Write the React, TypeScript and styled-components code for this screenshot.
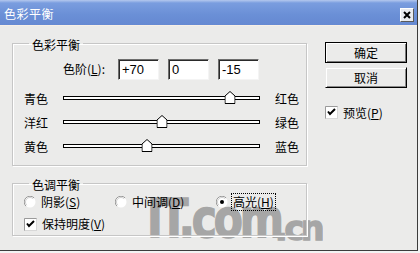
import React from "react";
import styled, { createGlobalStyle } from "styled-components";

const Global = createGlobalStyle`
  html, body { margin: 0; padding: 0; background: #f3f3f3; }
  body {
    font-family: "Noto Sans CJK SC", "Liberation Sans", sans-serif;
    font-size: 12px;
    color: #000;
  }
  * { box-sizing: border-box; }
`;

const Window = styled.div`
  position: relative;
  width: 418px;
  height: 251px;
  background: #ebebea;
  border-right: 1px solid #3c3c3c;
  border-bottom: 1px solid #3c3c3c;
  overflow: hidden;
  display: flex;
  flex-direction: column;
`;

const TitleBar = styled.div`
  flex: none;
  height: 26px;
  background: linear-gradient(#b4c8ee 0, #7a9ddf 3px, #6a8fd6 60%, #6589d2 100%);
  border-bottom: 1px solid #f7efe6;
  display: flex;
  justify-content: space-between;
  padding: 0 3px 0 4px;
`;

const Title = styled.span`
  color: #fff;
  font-size: 12px;
  line-height: 14px;
  margin-top: 7px;
  letter-spacing: 0.5px;
`;

const CloseButton = styled.div`
  width: 14px;
  height: 14px;
  margin-top: 8px;
  background: #e9ebef;
  border-top: 1px solid #fff;
  border-left: 1px solid #fff;
  border-right: 1px solid #5a5a5a;
  border-bottom: 1px solid #5a5a5a;
  display: flex;
  align-items: center;
  justify-content: center;
`;

const Body = styled.div`
  position: relative;
  z-index: 1;
  display: flex;
  padding: 8px 0 0 12px;
`;

const LeftColumn = styled.div`
  width: 295px;
  display: flex;
  flex-direction: column;
  gap: 8px;
`;

const Group = styled.fieldset`
  margin: 0;
  padding: 0;
  min-width: 0;
  border: 1px solid #c6c6c6;
  box-shadow: inset 1px 1px 0 #fff, 1px 1px 0 #fff;
`;

const Legend = styled.legend`
  margin-left: 16px;
  padding: 4px 3px 0;
  line-height: 14px;
  font-size: 12px;
`;

const GroupContent = styled.div<{ $pt: number; $pb: number }>`
  padding: ${(p) => p.$pt}px 0 ${(p) => p.$pb}px 11px;
`;

const LevelRow = styled.div`
  display: flex;
  align-items: center;
  height: 22px;
  padding-left: 39px;
`;

const LevelLabel = styled.span`
  width: 55px;
  line-height: 14px;
`;

const Inputs = styled.div`
  display: flex;
  gap: 9px;
`;

const NumberBox = styled.div`
  width: 41px;
  height: 21px;
  background: #fff;
  border-top: 1px solid #6e6e6e;
  border-left: 1px solid #6e6e6e;
  border-right: 1px solid #f4f4f4;
  border-bottom: 1px solid #f4f4f4;
  box-shadow: inset 1px 1px 0 #2a2a2a;
  font-family: "Liberation Sans", Arial, sans-serif;
  font-size: 13px;
  line-height: 19px;
  padding-left: 3px;
`;

const SliderGrid = styled.div`
  display: grid;
  grid-template-columns: 39px 197px auto;
  grid-auto-rows: 24px;
  margin-top: 7px;
  align-items: center;
`;

const SideLabel = styled.span<{ $right?: boolean }>`
  line-height: 14px;
  margin-left: ${(p) => (p.$right ? 15 : 0)}px;
`;

const TrackCell = styled.div`
  position: relative;
  height: 24px;
  display: flex;
  align-items: center;
`;

const Track = styled.div`
  position: relative;
  width: 100%;
  height: 4px;
  margin-top: -3px;
  background: #fff;
  border: 1px solid #000;
`;

const Thumb = styled.svg`
  position: absolute;
  top: -6px;
  width: 11px;
  height: 13px;
  transform: translateX(-50%);
`;

const OptionRow = styled.div<{ $mt?: number }>`
  display: flex;
  align-items: center;
  height: 20px;
  margin-top: ${(p) => p.$mt ?? 0}px;
`;

const RadioItem = styled.div<{ $w?: number }>`
  display: flex;
  align-items: center;
  gap: 4px;
  width: ${(p) => (p.$w ? `${p.$w}px` : "auto")};
`;

const OptionText = styled.span<{ $focus?: boolean }>`
  line-height: 14px;
  padding: 1px 1px;
  border: 1px dotted ${(p) => (p.$focus ? "#000" : "transparent")};
  margin-left: -1px;
`;

const U = styled.span`
  text-decoration: underline;
  text-underline-offset: 1px;
`;

const RightColumn = styled.div`
  margin-left: 18px;
  margin-top: 8px;
  width: 82px;
  display: flex;
  flex-direction: column;
`;

const Button = styled.div<{ $default?: boolean }>`
  width: 82px;
  height: 21px;
  display: flex;
  align-items: center;
  justify-content: center;
  background: #ebebea;
  border: 1px solid ${(p) => (p.$default ? "#000" : "#ebebea")};
  border-right-color: #000;
  border-bottom-color: #000;
  box-shadow: ${(p) =>
    p.$default
      ? "inset 1px 1px 0 #fff, inset -1px -1px 0 #7a7a7a"
      : "inset 1px 1px 0 #fff, inset -1px -1px 0 #8a8a8a"};
  line-height: 14px;
  & + & {
    margin-top: 4px;
  }
`;

const PreviewRow = styled.div`
  display: flex;
  align-items: center;
  gap: 5px;
  height: 18px;
  margin-top: 15px;
`;

const Watermark = styled.div`
  position: absolute;
  z-index: 0;
  left: 147px;
  top: 192px;
  display: flex;
  align-items: baseline;
  font-family: "DejaVu Sans", sans-serif;
  font-weight: bold;
  color: #8c8c8c;
  -webkit-text-stroke: 1.5px #8c8c8c;
  opacity: 0.72;
  pointer-events: none;
  white-space: nowrap;
`;

const MarkBig = styled.span`
  font-size: 53px;
  line-height: 53px;
  letter-spacing: -4px;
  display: inline-block;
  transform: scaleX(0.8);
  transform-origin: left bottom;
  width: 128px;
`;

const MarkSmall = styled.span`
  font-size: 33px;
  line-height: 33px;
  letter-spacing: -3px;
  display: inline-block;
  transform: translateY(3px);
`;

const CheckBox = () => (
  <svg width="13" height="13" viewBox="0 0 13 13">
    <rect x="0.5" y="0.5" width="12" height="12" fill="#fff" stroke="#d8d8d8" />
    <path d="M0.5 12.5 V0.5 H12.5" fill="none" stroke="#9a9a9a" />
    <path d="M3 5.5 L5 8 L10 3" fill="none" stroke="#000" strokeWidth="2" />
  </svg>
);

const Radio = ({ on }: { on?: boolean }) => (
  <svg width="12" height="12" viewBox="0 0 12 12">
    <circle cx="6" cy="6" r="5.5" fill="#fff" />
    <path d="M1.9 10.1 A5.5 5.5 0 0 1 10.1 1.9" fill="none" stroke="#9a9a9a" />
    <path d="M2.8 9.2 A4.5 4.5 0 0 1 9.2 2.8" fill="none" stroke="#d0d0d0" />
    {on && <circle cx="6" cy="6" r="2" fill="#000" />}
  </svg>
);

const sliders = [
  { left: "青色", right: "红色", value: 70 },
  { left: "洋红", right: "绿色", value: 0 },
  { left: "黄色", right: "蓝色", value: -15 },
];

export default function App() {
  return (
    <>
      <Global />
      <Window>
        <TitleBar>
          <Title>色彩平衡</Title>
          <CloseButton>
            <svg width="8" height="8" viewBox="0 0 8 8">
              <path d="M1 1 L7 7 M7 1 L1 7" stroke="#000" strokeWidth="2" />
            </svg>
          </CloseButton>
        </TitleBar>
        <Body>
          <LeftColumn>
            <Group>
              <Legend>色彩平衡</Legend>
              <GroupContent $pt={6} $pb={6}>
                <LevelRow>
                  <LevelLabel>
                    色阶(<U>L</U>):
                  </LevelLabel>
                  <Inputs>
                    <NumberBox>+70</NumberBox>
                    <NumberBox>0</NumberBox>
                    <NumberBox>-15</NumberBox>
                  </Inputs>
                </LevelRow>
                <SliderGrid>
                  {sliders.map((s) => (
                    <React.Fragment key={s.left}>
                      <SideLabel>{s.left}</SideLabel>
                      <TrackCell>
                        <Track>
                          <Thumb
                            viewBox="0 0 11 13"
                            style={{ left: `${50 + s.value / 2}%` }}
                          >
                            <polygon
                              points="5.5,0.5 10.5,5 10.5,12.5 0.5,12.5 0.5,5"
                              fill="#fff"
                              stroke="#000"
                            />
                          </Thumb>
                        </Track>
                      </TrackCell>
                      <SideLabel $right>{s.right}</SideLabel>
                    </React.Fragment>
                  ))}
                </SliderGrid>
              </GroupContent>
            </Group>
            <Group>
              <Legend>色调平衡</Legend>
              <GroupContent $pt={0} $pb={1}>
                <OptionRow>
                  <RadioItem $w={91}>
                    <Radio />
                    <OptionText>
                      阴影(<U>S</U>)
                    </OptionText>
                  </RadioItem>
                  <RadioItem $w={101}>
                    <Radio />
                    <OptionText>
                      中间调(<U>D</U>)
                    </OptionText>
                  </RadioItem>
                  <RadioItem>
                    <Radio on />
                    <OptionText $focus>
                      高光(<U>H</U>)
                    </OptionText>
                  </RadioItem>
                </OptionRow>
                <OptionRow $mt={2}>
                  <RadioItem>
                    <CheckBox />
                    <OptionText>
                      保持明度(<U>V</U>)
                    </OptionText>
                  </RadioItem>
                </OptionRow>
              </GroupContent>
            </Group>
          </LeftColumn>
          <RightColumn>
            <Button $default>确定</Button>
            <Button>取消</Button>
            <PreviewRow>
              <CheckBox />
              <span>
                预览(<U>P</U>)
              </span>
            </PreviewRow>
          </RightColumn>
        </Body>
        <Watermark>
          <MarkBig>IT.com</MarkBig>
          <MarkSmall>.cn</MarkSmall>
        </Watermark>
      </Window>
    </>
  );
}
